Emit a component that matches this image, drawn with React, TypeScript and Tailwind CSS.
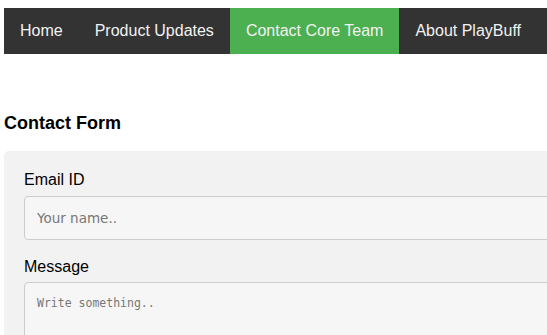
const NAV = [
  { label: "Home", active: false },
  { label: "Product Updates", active: false },
  { label: "Contact Core Team", active: true },
  { label: "About PlayBuff", active: false },
];

export default function App() {
  return (
    <div className="h-screen w-screen overflow-hidden bg-white font-['Liberation_Sans',Arial,sans-serif]">
      <div className="w-[900px] pl-1 pt-2">
        <ul className="flex bg-[#333333]">
          {NAV.map((n) => (
            <li
              key={n.label}
              className={`px-4 py-[14px] text-[16px] leading-[18px] text-[#f2f2f2] ${n.active ? "bg-[#4CAF50]" : ""}`}
            >
              {n.label}
            </li>
          ))}
        </ul>

        <h3 className="mt-[59px] mb-[16px] text-[18px] font-bold leading-[21.5px] text-black">Contact Form</h3>

        <form className="rounded-[5px] bg-[#f2f2f2] p-5">
          <label className="block text-[16px] leading-[18.4px] text-black">Email ID</label>
          <input
            type="text"
            placeholder="Your name.."
            className="mt-[7px] mb-[18px] box-border block h-[44px] w-full rounded-[4px] border border-[#cccccc] bg-[#f6f6f6] px-3 font-['DejaVu_Sans',sans-serif] text-[13.5px] placeholder:text-[#777777]"
          />
          <label className="block text-[16px] leading-[18.4px] text-black">Message</label>
          <textarea
            placeholder="Write something.."
            className="mt-[6px] box-border block h-[200px] w-full resize-none rounded-[4px] border border-[#cccccc] bg-[#f6f6f6] px-3 py-3 font-['DejaVu_Sans_Mono',monospace] text-[11.5px] placeholder:text-[#777777]"
          />
        </form>
      </div>
    </div>
  );
}
